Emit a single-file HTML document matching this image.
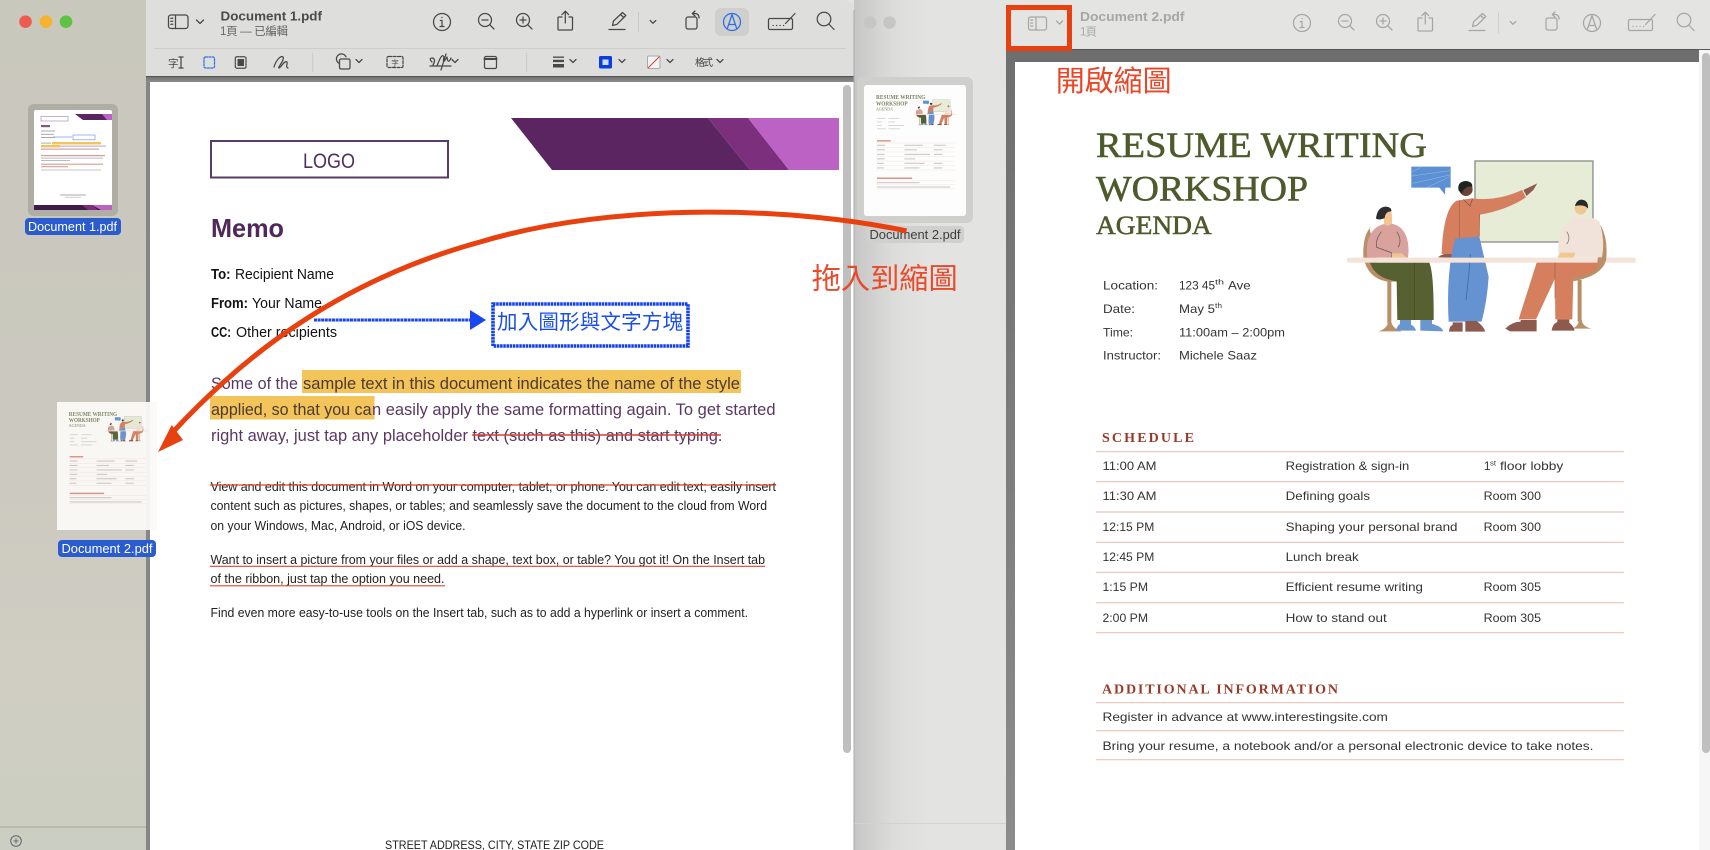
<!DOCTYPE html>
<html lang="zh-Hant"><head><meta charset="utf-8"><title>Preview</title>
<style>
html,body{margin:0;padding:0;width:1710px;height:850px;overflow:hidden;background:#e3e3e2}
svg{display:block}
text{font-family:"Liberation Sans","Noto Sans CJK TC",sans-serif}
.sf{font-family:"Liberation Serif","Noto Serif CJK SC",serif}
.p{fill:#5a3763;font-size:16.5px}
.h{fill:#4d3a30;font-size:16.5px}
.s{fill:#222;font-size:12.6px}
.m{fill:#111;font-size:14.4px}
.r{fill:#333;font-size:11.6px}
.rs{fill:#333;font-size:7px}
.o{fill:#4f5a2c}
.ti{stroke:#4f5a2c;stroke-width:.55}
.hd{fill:#973a28;font-weight:bold;font-size:14px}
.ln{stroke:#ecc4b8;stroke-width:1.2}
.ic{fill:none;stroke-width:1.25;stroke-linecap:round;stroke-linejoin:round}
</style></head><body>
<svg width="1710" height="850" viewBox="0 0 1710 850" xmlns="http://www.w3.org/2000/svg">
<defs>
<linearGradient id="side" x1="0" y1="0" x2="0" y2="1"><stop offset="0" stop-color="#c9c8bd"/><stop offset=".5" stop-color="#cbc9bf"/><stop offset=".8" stop-color="#d0cec3"/><stop offset="1" stop-color="#cbcec2"/></linearGradient>
<linearGradient id="shade" x1="0" y1="0" x2="1" y2="0"><stop offset="0" stop-color="#c6c6c6"/><stop offset=".25" stop-color="#dcdcdb"/><stop offset=".5" stop-color="#e3e3e2"/></linearGradient>
<linearGradient id="strip" x1="0" y1="0" x2="0" y2="1"><stop offset="0" stop-color="#6e6e6e"/><stop offset="1" stop-color="#8c8c8c"/></linearGradient>
<filter id="bl" x="-5%" y="-5%" width="110%" height="110%"><feGaussianBlur stdDeviation=".35"/></filter>

<g id="illus">
 <rect x="585" y="63" width="354" height="243" fill="#e6ecd6" stroke="#8a8f88" stroke-width="4"/>
 <path d="M394 80H512V143H496L495 164 478 143H394Z" fill="#5d8fd4"/>
 <path d="M396 96L422 82M396 108L510 92M398 130L510 105M440 143L510 110" stroke="#8cc8d0" stroke-width="1.5" fill="none"/>
 <path d="M272 262Q248 285 250 350 262 415 322 425H350V405L300 398 268 262Z" fill="#b98f68"/>
 <rect x="322" y="420" width="12" height="130" fill="#b98f68"/>
 <path d="M295 574Q322 566 324 546H334Q338 566 366 574Z" fill="#b98f68"/>
 <path d="M262 353C255 290 280 252 326 251 370 250 392 295 384 353Z" fill="#d9a29c"/>
 <path d="M312 250Q322 264 336 250V230H312Z" fill="#f2c690"/>
 <ellipse cx="322" cy="226" rx="14" ry="18" fill="#f2c690"/>
 <path d="M288 236Q292 200 318 200 336 202 334 214 316 214 314 234 300 242 288 236Z" fill="#2e2e2e"/>
 <path d="M304 275Q285 300 290 322L334 338V352M350 275Q368 300 354 322" fill="none" stroke="#5a5058" stroke-width="2"/>
 <path d="M335 353V340H366L379 353Z" fill="#f2c690"/>
 <path d="M270 368H448Q462 400 461 540H352L350 424Q285 415 270 368Z" fill="#566030"/>
 <path d="M403 368V540" stroke="#40482a" stroke-width="2"/>
 <path d="M348 572Q352 556 360 552V540H393V554Q405 560 408 572Z" fill="#6a96d0"/>
 <path d="M421 572V540H456V552Q484 558 490 574Z" fill="#6a96d0"/>
 <path d="M485 342Q490 205 530 182L575 175Q650 185 726 150L738 172Q680 210 600 224L598 294 525 298 518 342Z" fill="#d57f5e"/>
 <path d="M730 150L772 130 760 150 740 168Z" fill="#8d5a50"/>
 <path d="M550 178L570 198 578 176" fill="none" stroke="#7a5045" stroke-width="2"/>
 <path d="M538 182V298M598 222V290" fill="none" stroke="#a35f47" stroke-width="2"/>
 <circle cx="558" cy="148" r="20" fill="#6b4338"/>
 <path d="M536 152Q530 126 556 123 578 124 577 140 555 136 546 160Z" fill="#1f2420"/>
 <path d="M474 352Q484 344 494 342H520V353Z" fill="#8d5a50"/>
 <path d="M525 296L598 290 626 410Q622 480 605 545H556L566 408 558 545H506Q498 400 525 296Z" fill="#6592d0"/>
 <path d="M571 342L566 410 558 480" fill="none" stroke="#3f5f92" stroke-width="2"/>
 <path d="M507 575Q508 558 518 555V547H548V575Z" fill="#8d5a50"/>
 <path d="M556 575V543H590Q612 560 616 575Z" fill="#8d5a50"/>
 <rect x="201" y="353" width="866" height="15" fill="#f3e3d8"/>
 <path d="M962 255Q986 300 978 362 965 408 880 424L878 408Q945 402 952 370Z" fill="#b98f68"/>
 <rect x="893" y="420" width="12" height="125" fill="#b98f68"/>
 <path d="M875 566Q895 560 897 540H905Q908 560 935 566Z" fill="#b98f68"/>
 <path d="M836 352Q826 262 882 234 930 224 958 244 976 300 966 352Z" fill="#f1e3d9"/>
 <ellipse cx="902" cy="205" rx="18" ry="19" fill="#f2c690"/>
 <path d="M885 198Q890 179 906 179 926 182 924 206 915 192 885 198Z" fill="#25292a"/>
 <path d="M860 275Q874 295 860 312" fill="none" stroke="#6a6a6a" stroke-width="2"/>
 <path d="M832 353L842 338H886L880 353Z" fill="#f2c690"/>
 <path d="M770 368H958Q950 405 880 410L877 538H826L825 415 768 538H716Z" fill="#d57f5e"/>
 <path d="M825 368V475" stroke="#a35f47" stroke-width="2"/>
 <path d="M676 566Q695 546 722 545V540H770V574H690Z" fill="#8d5a50"/>
 <path d="M815 572Q817 552 832 546V538H868V548Q882 560 884 572Z" fill="#8d5a50"/>
</g>

<g id="d2t">
 <g fill="#d2d2d0"><rect x="1103" y="283" width="55" height="6"/><rect x="1179" y="283" width="72" height="6"/><rect x="1103" y="307" width="32" height="6"/><rect x="1179" y="307" width="43" height="6"/><rect x="1103" y="331" width="30" height="6"/><rect x="1179" y="331" width="106" height="6"/><rect x="1103" y="353" width="58" height="6"/><rect x="1179" y="353" width="78" height="6"/></g>
 <rect x="1102" y="432" width="92" height="10" fill="#d79488"/>
 <g fill="#f6e0d9"><rect x="1096" y="450" width="528" height="3"/><rect x="1096" y="480" width="528" height="3"/><rect x="1096" y="510" width="528" height="3"/><rect x="1096" y="541" width="528" height="3"/><rect x="1096" y="571" width="528" height="3"/><rect x="1096" y="601" width="528" height="3"/><rect x="1096" y="631" width="528" height="3"/><rect x="1096" y="701" width="528" height="3"/><rect x="1096" y="729" width="528" height="3"/><rect x="1096" y="758" width="528" height="3"/></g>
 <g fill="#c6c6c4"><rect x="1102" y="463" width="54" height="7"/><rect x="1286" y="463" width="123" height="7"/><rect x="1484" y="463" width="79" height="7"/><rect x="1102" y="493" width="54" height="7"/><rect x="1286" y="493" width="84" height="7"/><rect x="1484" y="493" width="57" height="7"/><rect x="1102" y="524" width="52" height="7"/><rect x="1286" y="524" width="172" height="7"/><rect x="1484" y="524" width="57" height="7"/><rect x="1102" y="554" width="52" height="7"/><rect x="1286" y="554" width="73" height="7"/><rect x="1102" y="584" width="46" height="7"/><rect x="1286" y="584" width="137" height="7"/><rect x="1484" y="584" width="57" height="7"/><rect x="1102" y="615" width="46" height="7"/><rect x="1286" y="615" width="101" height="7"/><rect x="1484" y="615" width="57" height="7"/><rect x="1102" y="714" width="286" height="7"/><rect x="1102" y="743" width="491" height="7"/></g>
 <rect x="1102" y="683" width="236" height="10" fill="#d79488"/>
 <use href="#illus" transform="translate(1280 140) scale(.3333)"/>
</g>

<g id="tb">
 <circle cx="442" cy="22" r="8.5"/><path d="M442 17.4v.2M440.3 20.5H442V26.5M440 26.5h4"/>
 <circle cx="485" cy="20" r="6.5"/><path d="M482 20h6M489.7 24.7L494 29"/>
 <circle cx="523" cy="20" r="6.5"/><path d="M520 20h6M523 17v6M527.7 24.7L532 29"/>
 <path d="M562 17H558.6A.8.8 0 0 0 558 18V29A1 1 0 0 0 559 30H571.5A1 1 0 0 0 572.5 29V18A.8.8 0 0 0 572 17H569M565.3 11.5V23M562 14.6L565.3 11.2 568.6 14.6"/>
 <path d="M609 29.5H625M612.5 25.5L613.5 21 622.5 12.5 625.8 15.5 617 24.3ZM620.5 14.5L623.8 17.5"/>
 <path d="M650.2 20.5L653 23.3 655.8 20.5"/>
 <rect x="686" y="17" width="11" height="12" rx="2"/><path d="M692.5 13.5H695Q699 13.5 699 18M695 11L692.3 13.5 695 16"/>
 <rect x="768.5" y="18.5" width="24" height="11" rx="1.5"/><path d="M773 25.5h.2M776.5 25.5h.2M780 25.5h.2M783.5 25.5h.2M785.5 23.5L795 13.5"/>
 <circle cx="824" cy="19" r="6.8"/><path d="M828.8 24L834 29.5"/>
</g>
</defs>

<!-- backdrop / window 2 -->
<rect x="854" y="0" width="856" height="850" fill="#e4e4e3"/>
<rect x="854" y="49" width="152" height="801" fill="url(#shade)"/>
<rect x="854" y="0" width="152" height="49" fill="url(#shade)"/>
<rect x="854" y="823" width="152" height="1" fill="#d2d2d1"/>
<rect x="1006" y="49" width="704" height="801" fill="url(#strip)"/>
<rect x="1006" y="49" width="704" height="1" fill="#555"/>
<rect x="1015" y="62" width="684" height="788" fill="#fff"/>
<rect x="1699" y="50" width="11" height="800" fill="#f6f6f6"/>
<rect x="1702" y="53" width="8" height="700" rx="4" fill="#bfbfbf"/>

<circle cx="851" cy="22.5" r="6.3" fill="#c6c6c5"/><circle cx="870" cy="22.5" r="6.3" fill="#c6c6c5"/><circle cx="889.5" cy="22.5" r="6.3" fill="#c6c6c5"/>

<!-- window 2 sidebar thumb -->
<rect x="857" y="77" width="116" height="146" rx="6" fill="#cfcfce"/>
<rect x="864" y="85" width="102" height="131" rx="3" fill="#fdfdfd"/>
<g filter="url(#bl)"><use href="#d2t" transform="translate(864 85) scale(.149) translate(-1015 -62)"/></g>
<text class="sf" fill="#7b835c" x="876" y="99" font-size="6" textLength="49.3" lengthAdjust="spacingAndGlyphs" font-weight="bold">RESUME WRITING</text>
<text class="sf" fill="#7b835c" x="876" y="105.3" font-size="6" textLength="31.6" lengthAdjust="spacingAndGlyphs" font-weight="bold">WORKSHOP</text>
<text class="sf" fill="#7b835c" x="876" y="110.3" font-size="4.2" textLength="17.1" lengthAdjust="spacingAndGlyphs">AGENDA</text>
<rect x="866" y="226" width="98" height="17" rx="4" fill="#d0d0cf"/>
<text x="869.5" y="239" font-size="13" fill="#3f3f3f" textLength="91" lengthAdjust="spacingAndGlyphs">Document 2.pdf</text>

<!-- window 2 toolbar -->
<g class="ic" stroke="#a6a6a6">
 <rect x="1028.5" y="17" width="18" height="13" rx="2"/><path d="M1036 17V30M1030.7 20h2M1030.7 23h2M1030.7 26h2M1056.5 21L1059.5 24 1062.5 21"/>
 <use href="#tb" transform="translate(860 1)"/>
 <circle cx="1592" cy="23" r="8.5"/><path d="M1587.5 29L1592 15.5 1596.5 29M1589.4 25.5h5.2"/>
 <path d="M1498.5 13V33" stroke="#cfcfce" stroke-width="1"/>
</g>
<text x="1080" y="21" font-size="13" font-weight="bold" fill="#a6a6a6" textLength="104.5" lengthAdjust="spacingAndGlyphs">Document 2.pdf</text>
<text x="1080" y="35.5" font-size="11.5" fill="#a6a6a6" textLength="17">1頁</text>

<!-- doc 2 -->
<text class="sf o ti" x="1096" y="157" font-size="36" textLength="331" lengthAdjust="spacingAndGlyphs">RESUME WRITING</text>
<text class="sf o ti" x="1096" y="200.7" font-size="36" textLength="212" lengthAdjust="spacingAndGlyphs">WORKSHOP</text>
<text class="sf o ti" x="1096" y="234" font-size="26" textLength="115.7" lengthAdjust="spacingAndGlyphs">AGENDA</text>
<text class="r" x="1103" y="289.3" textLength="55" lengthAdjust="spacingAndGlyphs">Location:</text>
<text class="r" x="1179" y="289.3" textLength="36" lengthAdjust="spacingAndGlyphs">123 45</text><text class="rs" x="1215" y="284.5" textLength="9" lengthAdjust="spacingAndGlyphs">th</text><text class="r" x="1228" y="289.3" textLength="22.7" lengthAdjust="spacingAndGlyphs">Ave</text>
<text class="r" x="1103" y="313" textLength="32" lengthAdjust="spacingAndGlyphs">Date:</text>
<text class="r" x="1179" y="313" textLength="36" lengthAdjust="spacingAndGlyphs">May 5</text><text class="rs" x="1215" y="308" textLength="7" lengthAdjust="spacingAndGlyphs">th</text>
<text class="r" x="1103" y="336.7" textLength="30" lengthAdjust="spacingAndGlyphs">Time:</text>
<text class="r" x="1179" y="336.7" textLength="106" lengthAdjust="spacingAndGlyphs">11:00am – 2:00pm</text>
<text class="r" x="1103" y="359.3" textLength="58" lengthAdjust="spacingAndGlyphs">Instructor:</text>
<text class="r" x="1179" y="359.3" textLength="78" lengthAdjust="spacingAndGlyphs">Michele Saaz</text>

<text class="sf hd" x="1102" y="442" textLength="92">SCHEDULE</text>
<g class="ln"><path d="M1096 451.7H1624M1096 481.7H1624M1096 512H1624M1096 542.3H1624M1096 572.3H1624M1096 602.7H1624M1096 632.7H1624M1096 702.7H1624M1096 730.7H1624M1096 759.7H1624" fill="none"/></g>
<text class="r" x="1102.5" y="470" textLength="54" lengthAdjust="spacingAndGlyphs">11:00 AM</text>
<text class="r" x="1285.7" y="470" textLength="123.6" lengthAdjust="spacingAndGlyphs">Registration &amp; sign-in</text>
<text class="r" x="1484" y="470">1</text><text class="rs" x="1490" y="465.5" textLength="6" lengthAdjust="spacingAndGlyphs">st</text><text class="r" x="1500" y="470" textLength="63.2" lengthAdjust="spacingAndGlyphs">floor lobby</text>
<text class="r" x="1102.5" y="500" textLength="54" lengthAdjust="spacingAndGlyphs">11:30 AM</text>
<text class="r" x="1285.7" y="500" textLength="84.3" lengthAdjust="spacingAndGlyphs">Defining goals</text>
<text class="r" x="1483.6" y="500" textLength="57.4" lengthAdjust="spacingAndGlyphs">Room 300</text>
<text class="r" x="1102.5" y="531" textLength="51.8" lengthAdjust="spacingAndGlyphs">12:15 PM</text>
<text class="r" x="1285.7" y="531" textLength="171.8" lengthAdjust="spacingAndGlyphs">Shaping your personal brand</text>
<text class="r" x="1483.6" y="531" textLength="57.4" lengthAdjust="spacingAndGlyphs">Room 300</text>
<text class="r" x="1102.5" y="561" textLength="51.8" lengthAdjust="spacingAndGlyphs">12:45 PM</text>
<text class="r" x="1285.7" y="561" textLength="72.9" lengthAdjust="spacingAndGlyphs">Lunch break</text>
<text class="r" x="1102.5" y="591" textLength="45.5" lengthAdjust="spacingAndGlyphs">1:15 PM</text>
<text class="r" x="1285.7" y="591" textLength="137.2" lengthAdjust="spacingAndGlyphs">Efficient resume writing</text>
<text class="r" x="1483.6" y="591" textLength="57.4" lengthAdjust="spacingAndGlyphs">Room 305</text>
<text class="r" x="1102.5" y="622" textLength="45.5" lengthAdjust="spacingAndGlyphs">2:00 PM</text>
<text class="r" x="1285.7" y="622" textLength="101.1" lengthAdjust="spacingAndGlyphs">How to stand out</text>
<text class="r" x="1483.6" y="622" textLength="57.4" lengthAdjust="spacingAndGlyphs">Room 305</text>
<text class="sf hd" x="1102" y="693.3" textLength="236">ADDITIONAL INFORMATION</text>
<text class="r" x="1102.5" y="721" textLength="285.4" lengthAdjust="spacingAndGlyphs">Register in advance at www.interestingsite.com</text>
<text class="r" x="1102.5" y="750" textLength="491" lengthAdjust="spacingAndGlyphs">Bring your resume, a notebook and/or a personal electronic device to take notes.</text>

<use href="#illus" transform="translate(1280 140) scale(.3333)"/>

<!-- red labels -->
<rect x="1008.5" y="7.5" width="61" height="41" fill="none" stroke="#e8400e" stroke-width="5"/>
<text x="1055.7" y="91" font-size="29" fill="#ea4526" textLength="116" lengthAdjust="spacingAndGlyphs">開啟縮圖</text>

<!-- window 1 -->
<path d="M0 0H844Q854 0 854 10V850H0Z" fill="#fff"/>
<rect x="0" y="0" width="146" height="850" fill="url(#side)"/>
<rect x="146" y="0" width="4" height="850" fill="#868686"/>
<path d="M146 0H844Q854 0 854 10V76H146Z" fill="#dededd"/>
<rect x="154" y="48" width="692" height="1" fill="#cdcdcc"/>
<rect x="146" y="76" width="708" height="6" fill="url(#strip)"/>
<rect x="146" y="76" width="708" height="1" fill="#555"/>
<rect x="150" y="82" width="704" height="768" fill="#fff"/>
<rect x="843" y="85" width="8" height="668" rx="4" fill="#bfbfbf"/>
<rect x="853.5" y="10" width="1" height="840" fill="#a9a9a9"/>

<circle cx="25.5" cy="21.7" r="6.3" fill="#ee5c50"/><circle cx="46" cy="21.7" r="6.3" fill="#f6b32f"/><circle cx="66" cy="21.7" r="6.3" fill="#5fc245"/>

<!-- sidebar thumb 1 -->
<rect x="28" y="104" width="90" height="112" rx="6" fill="#afaea5"/>
<rect x="34" y="110" width="78" height="100" rx="2" fill="#fff"/>
<g filter="url(#bl)">
 <rect x="41" y="116.5" width="27" height="4.5" fill="none" stroke="#9a82a6" stroke-width=".6"/>
 <path d="M75 114H112V120H83Z" fill="#5a2560"/><path d="M102 114H112V120H107Z" fill="#bc62c4"/>
 <rect x="41" y="125" width="9" height="2.2" fill="#7a5a88"/>
 <g fill="#aaa"><rect x="41" y="130.5" width="14" height="1"/><rect x="41" y="133.8" width="13" height="1"/><rect x="41" y="137" width="14" height="1"/></g>
 <path d="M53 137H72" stroke="#7f95f2" stroke-width=".7"/><rect x="73" y="135" width="22" height="4.8" fill="#fff" stroke="#7f95f2" stroke-width=".7"/>
 <rect x="52" y="142" width="49" height="2.4" fill="#f2c45a"/><rect x="41" y="145" width="19" height="2.4" fill="#f2c45a"/>
 <rect x="41" y="142.6" width="10" height="1" fill="#b8a4bd"/><rect x="60" y="145.6" width="46" height="1" fill="#b8a4bd"/><rect x="41" y="148.6" width="58" height="1" fill="#c08f9a"/>
 <rect x="41" y="155" width="64" height="1.2" fill="#d39a90"/><rect x="41" y="157.6" width="62" height="1" fill="#bbb"/><rect x="41" y="160" width="29" height="1" fill="#bbb"/>
 <rect x="41" y="163.6" width="62" height="1.3" fill="#e0aaa2"/><rect x="41" y="166" width="27" height="1.3" fill="#e0aaa2"/>
 <rect x="41" y="169.5" width="60" height="1" fill="#c4c4c4"/>
 <rect x="60" y="194.5" width="26" height="1" fill="#aaa"/><rect x="65" y="196.8" width="16" height="1" fill="#ccc"/>
 <path d="M34 205H96L102 210H34Z" fill="#3e1a4a"/><path d="M82 205H92L98 210H88Z" fill="#7b2f7d"/><path d="M92 205H112V210H101Z" fill="#bc62c4"/>
</g>
<rect x="25" y="218" width="96" height="17" rx="4" fill="#2a5bcf"/>
<text x="28" y="231" font-size="13" fill="#fff" textLength="89" lengthAdjust="spacingAndGlyphs">Document 1.pdf</text>

<path d="M0 827H146" stroke="#a9aaa0" stroke-width="1"/>
<circle cx="16" cy="841" r="5.3" fill="none" stroke="#666" stroke-width="1"/><path d="M13.5 841h5M16 838.5v5" stroke="#666" stroke-width="1"/>

<!-- window 1 toolbar -->
<g class="ic" stroke="#484848">
 <rect x="168.5" y="15" width="19.5" height="13.5" rx="2.5"/><path d="M175.5 15V28.5M170.8 18.3h2M170.8 21.3h2M170.8 24.3h2M196.5 20L200 23.5 203.5 20"/>
 <use href="#tb"/>
 <path d="M638.5 12V32" stroke="#c9c9c8" stroke-width="1"/>
 <path d="M312.7 53V72M526.6 53V72" stroke="#cbcbca" stroke-width="1"/>
</g>
<text x="220.5" y="20.5" font-size="13" font-weight="bold" fill="#4a4a4a" textLength="101.5" lengthAdjust="spacingAndGlyphs">Document 1.pdf</text>
<text x="220" y="35" font-size="11.5" fill="#666" textLength="68" lengthAdjust="spacing">1頁 — 已編輯</text>
<rect x="715" y="8" width="34" height="28" rx="6" fill="#cfcfce"/>
<g class="ic" stroke="#2b6fe8"><circle cx="732" cy="22" r="8.5"/><path d="M727.5 28L732 14.5 736.5 28M729.4 24.5h5.2"/></g>

<text x="168" y="67" font-size="10.5" fill="#444">字</text>
<g class="ic" stroke="#484848" stroke-width="1.1">
 <path d="M181 57V68M179 57h4M179 68h4"/>
 <rect x="204" y="57" width="10.5" height="11" rx="1.5" stroke="#2b6fe8" stroke-dasharray="2 1.4"/>
 <rect x="235.3" y="56.8" width="10.7" height="11.4" rx="1.5" stroke-dasharray="2 1"/>
 <rect x="237.5" y="59" width="6.5" height="7" fill="#484848" stroke="none"/>
 <path d="M274 67C276 60 281 55 283 57 285 60 277 68 279 68 281 68 284 60 287 62 288 64 285 67 288 68"/>
 <path d="M339.5 63.5A5 5 0 1 1 346 56.8"/><rect x="339.5" y="59" width="10.5" height="10" rx="1.5"/>
 <path d="M356 59.5L359 62.5 362 59.5"/>
 <rect x="387" y="56.5" width="16" height="11" rx="1.5" stroke-dasharray="3 1.5"/>
 <path d="M430 66H451M432 62Q428 58 433 58 436 60 433 65M437 66Q442 52 444 57 442 66 447 57 448 65 451 58M441 70L446 54"/>
 <path d="M452 59.5L455 62.5 458 59.5"/>
 <rect x="484.5" y="56.5" width="12" height="12" rx="1.5"/><path d="M484.5 59h12" stroke-width="2"/>
 <path d="M570 59.5L573 62.5 576 59.5M619 59.5L622 62.5 625 59.5M667 59.5L670 62.5 673 59.5M717 59.5L720 62.5 723 59.5"/>
</g>
<text x="395" y="65.5" font-size="7.5" fill="#444" text-anchor="middle">字</text>
<g fill="#484848"><rect x="553" y="56.5" width="11" height="1.3"/><rect x="553" y="59.8" width="11" height="2.3"/><rect x="553" y="64" width="11" height="3.5"/></g>
<rect x="599" y="56" width="13" height="12.5" rx="1.5" fill="#0a3fdf"/><rect x="602.5" y="59.5" width="6" height="5.5" fill="#d5dcf2"/>
<rect x="647.5" y="56" width="12.5" height="12.5" rx="1.5" fill="#f2f2f2" stroke="#a8a8a8"/>
<path d="M648 68L659.5 56.5" stroke="#e04030" stroke-width="1"/>
<text x="695" y="66" font-size="10" fill="#444" textLength="18">格式</text>

<!-- doc 1 -->
<path d="M511 118H708L750 170H552Z" fill="#5a2560"/>
<path d="M708 118H748L789 170H750Z" fill="#7b2f7d"/>
<path d="M748 118H839V170H789Z" fill="#bc62c4"/>
<rect x="211" y="141" width="237" height="36.5" fill="none" stroke="#5a3a68" stroke-width="2"/>
<text x="303" y="168" font-size="21" fill="#50305e" textLength="52" lengthAdjust="spacingAndGlyphs">LOGO</text>
<text x="211" y="237" font-size="26" font-weight="bold" fill="#50285a" textLength="73" lengthAdjust="spacingAndGlyphs">Memo</text>
<text class="m" x="211" y="279" font-weight="bold" textLength="19.5" lengthAdjust="spacingAndGlyphs">To:</text>
<text class="m" x="235" y="279" textLength="99" lengthAdjust="spacingAndGlyphs">Recipient Name</text>
<text class="m" x="211" y="308" font-weight="bold" textLength="37" lengthAdjust="spacingAndGlyphs">From:</text>
<text class="m" x="252" y="308" textLength="70" lengthAdjust="spacingAndGlyphs">Your Name</text>
<text class="m" x="211" y="337" font-weight="bold" textLength="20" lengthAdjust="spacingAndGlyphs">CC:</text>
<text class="m" x="236" y="337" textLength="101" lengthAdjust="spacingAndGlyphs">Other recipients</text>

<rect x="302" y="370" width="439" height="23" fill="#f2c45a"/>
<rect x="210" y="396" width="164.5" height="23.5" fill="#f2c45a"/>
<text class="p" x="211" y="389" textLength="87" lengthAdjust="spacingAndGlyphs">Some of the</text>
<text class="h" x="303" y="389" textLength="437" lengthAdjust="spacingAndGlyphs">sample text in this document indicates the name of the style</text>
<text class="h" x="211" y="415" textLength="160.5" lengthAdjust="spacingAndGlyphs">applied, so that you ca</text>
<text class="p" x="372" y="415" textLength="403.5" lengthAdjust="spacingAndGlyphs">n easily apply the same formatting again. To get started</text>
<text class="p" x="211" y="441" textLength="257" lengthAdjust="spacingAndGlyphs">right away, just tap any placeholder</text>
<text class="p" x="472.5" y="441" textLength="250" lengthAdjust="spacingAndGlyphs">text (such as this) and start typing.</text>
<path d="M472 435H721" stroke="#d8402a" stroke-width="1.6"/>

<text class="s" x="210.5" y="491" textLength="565.5" lengthAdjust="spacingAndGlyphs">View and edit this document in Word on your computer, tablet, or phone. You can edit text; easily insert</text>
<path d="M210 485H776" stroke="#e0452c" stroke-width="1.3"/>
<text class="s" x="210.5" y="510" textLength="556.5" lengthAdjust="spacingAndGlyphs">content such as pictures, shapes, or tables; and seamlessly save the document to the cloud from Word</text>
<text class="s" x="210.5" y="530" textLength="255" lengthAdjust="spacingAndGlyphs">on your Windows, Mac, Android, or iOS device.</text>
<text class="s" x="210.5" y="564" textLength="554.5" lengthAdjust="spacingAndGlyphs">Want to insert a picture from your files or add a shape, text box, or table? You got it! On the Insert tab</text>
<path d="M210 566.3H765" stroke="#e0452c" stroke-width="1.2"/>
<text class="s" x="210.5" y="583" textLength="234" lengthAdjust="spacingAndGlyphs">of the ribbon, just tap the option you need.</text>
<path d="M210 585.8H445" stroke="#e0452c" stroke-width="1.2"/>
<text class="s" x="210.5" y="617" textLength="537.5" lengthAdjust="spacingAndGlyphs">Find even more easy-to-use tools on the Insert tab, such as to add a hyperlink or insert a comment.</text>
<text x="385" y="849" font-size="12.2" fill="#222" textLength="219" lengthAdjust="spacingAndGlyphs">STREET ADDRESS, CITY, STATE  ZIP CODE</text>

<!-- blue annotation -->
<path d="M314 320H472" stroke="#1846f0" stroke-width="3" stroke-dasharray="3 .6"/>
<path d="M470 310L486 320 470 330Z" fill="#1846f0"/>
<rect x="493" y="304" width="195" height="42" fill="none" stroke="#1040f0" stroke-width="3.6" stroke-dasharray="2.5 .7"/>
<text x="497" y="329" font-size="20.5" fill="#1a4ee8" textLength="186" lengthAdjust="spacing">加入圖形與文字方塊</text>

<!-- ghost -->
<g opacity=".94">
 <rect x="57" y="402" width="100" height="128" fill="#fbfaf8"/>
 <g filter="url(#bl)"><use href="#d2t" transform="translate(57 402) scale(.146) translate(-1015 -62)"/></g>
 <text class="sf" fill="#7b835c" x="68.8" y="415.9" font-size="5.9" textLength="48.3" lengthAdjust="spacingAndGlyphs" font-weight="bold">RESUME WRITING</text>
 <text class="sf" fill="#7b835c" x="68.8" y="422.2" font-size="5.9" textLength="31" lengthAdjust="spacingAndGlyphs" font-weight="bold">WORKSHOP</text>
 <text class="sf" fill="#7b835c" x="68.8" y="427.1" font-size="4.1" textLength="16.8" lengthAdjust="spacingAndGlyphs">AGENDA</text>
</g>
<rect x="58" y="540" width="98" height="17" rx="4" fill="#2a5bcf"/>
<text x="61.5" y="553" font-size="13" fill="#fff" textLength="91" lengthAdjust="spacingAndGlyphs">Document 2.pdf</text>

<!-- red arrow -->
<path d="M906.5 231C800 208 620 200 480 242C330 283 235 365 172 433" fill="none" stroke="#e8400e" stroke-width="5"/>
<path d="M158 452L171.7 425 183 440Z" fill="#e8400e"/>
<text x="811.7" y="288.5" font-size="29" fill="#ea4a2a" textLength="146" lengthAdjust="spacingAndGlyphs">拖入到縮圖</text>
</svg>
</body></html>
